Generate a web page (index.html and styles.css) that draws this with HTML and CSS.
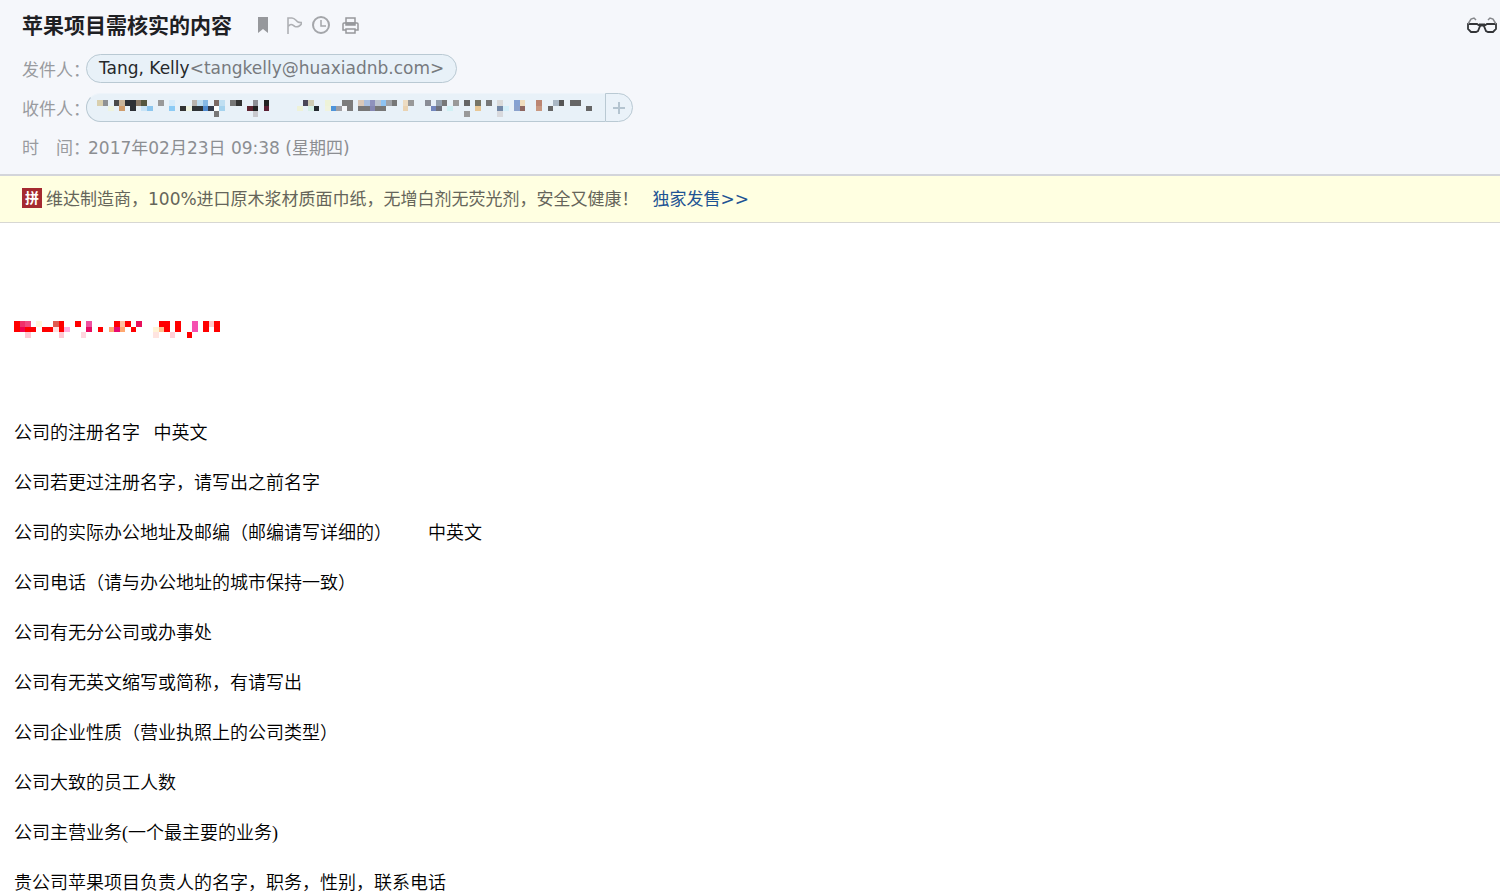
FILE: index.html
```html
<!DOCTYPE html>
<html lang="zh-CN">
<head>
    <meta charset="UTF-8">
    <meta name="viewport" content="width=device-width, initial-scale=1.0">
    <title>苹果项目需核实的内容</title>
    <link rel="stylesheet" href="styles.css">
</head>
<body>
    <header class="mail-header">
        <div class="title-row">
            <h1 class="mail-title">苹果项目需核实的内容</h1>
            <div class="mail-tools">
                <button class="icon-btn" aria-label="书签">
                    <svg width="20" height="20" viewBox="0 0 20 20"><path d="M5 1h10v16l-5-4-5 4z" fill="#96989c"/></svg>
                </button>
                <button class="icon-btn" aria-label="标记">
                    <svg width="20" height="20" viewBox="0 0 20 20" fill="none" stroke="#aeb0b4" stroke-width="1.6"><path d="M6 18V2h4c3 0 4 3 6 4 1 .6 2 .5 4 .5-1 3-4 5-7 4-2-1-2-2-4-2-1 0-2 1-3 2"/></svg>
                </button>
                <button class="icon-btn" aria-label="提醒">
                    <svg width="20" height="20" viewBox="0 0 20 20" fill="none" stroke="#a4a6aa" stroke-width="2"><circle cx="10" cy="9" r="8"/><path d="M10 4v6h5" stroke-width="1.5"/></svg>
                </button>
                <button class="icon-btn" aria-label="打印">
                    <svg width="20" height="20" viewBox="0 0 20 20" fill="none" stroke="#96989c" stroke-width="1.5"><path d="M6 7V2h9v5"/><path d="M6 14H3V8q0-1 1-1h13q1 0 1 1v6h-3"/><path d="M6 7h9v2H6z" fill="#96989c"/><path d="M6 13h9v4H6z"/></svg>
                </button>
            </div>
            <button class="icon-btn reader-btn" aria-label="阅读模式">
                <svg width="32" height="18" viewBox="0 0 32 18" fill="none" stroke="#333538" stroke-width="1.8"><path d="M2 7h9l3 2-2 5-2 1H5l-3-3z"/><path d="M30 7h-9l-3 2 2 5 2 1h5l3-3z"/><path d="M13 8h6" stroke-width="3"/><path d="M2 7l3-5 3-1 2 2M30 7l-3-5-3-1-2 2" stroke="#85878b" stroke-width="1.5"/></svg>
            </button>
        </div>
        <div class="info-row">
            <span class="label">发件人：</span>
            <span class="bubble"><span class="name">Tang, Kelly</span>&lt;tangkelly@huaxiadnb.com&gt;</span>
        </div>
        <div class="info-row">
            <span class="label">收件人：</span>
            <span class="bubble bubble-to"><svg id="toMosaic" width="495" height="17" viewBox="0 0 89 3" shape-rendering="crispEdges"></svg></span>
            <button class="add-btn" aria-label="添加">
                <svg width="12" height="12" viewBox="0 0 12 12"><path d="M6 0v12M0 6h12" stroke="#b4c4d0" stroke-width="2"/></svg>
            </button>
        </div>
        <div class="info-row">
            <span class="label">时　间：</span>
            <span class="date">2017年02月23日 09:38 (星期四)</span>
        </div>
    </header>

    <div class="ad-bar">
        <span class="ad-logo">拼</span>
        <span class="ad-text">维达制造商，100%进口原木浆材质面巾纸，无增白剂无荧光剂，安全又健康！</span>
        <a class="ad-link" href="#">独家发售&gt;&gt;</a>
    </div>

    <main class="mail-body">
        <svg class="greeting" id="nameMosaic" width="206" height="17" viewBox="0 0 37 3" shape-rendering="crispEdges"></svg>
        <p>公司的注册名字&nbsp;&nbsp; 中英文</p>
        <p>公司若更过注册名字，请写出之前名字</p>
        <p>公司的实际办公地址及邮编（邮编请写详细的）&nbsp;&nbsp;&nbsp;&nbsp;&nbsp;&nbsp;&nbsp; 中英文</p>
        <p>公司电话（请与办公地址的城市保持一致）</p>
        <p>公司有无分公司或办事处</p>
        <p>公司有无英文缩写或简称，有请写出</p>
        <p>公司企业性质（营业执照上的公司类型）</p>
        <p>公司大致的员工人数</p>
        <p>公司主营业务(一个最主要的业务)</p>
        <p>贵公司苹果项目负责人的名字，职务，性别，联系电话</p>
    </main>

    <script>
        // 打码色块，每行: 列号 颜色
        const toRows = [
            '0 d9cfae,1 8f9194,3 4a4a4a,4 c9b49a,5 2d3036,6 2d3036,7 8a7a68,8 55573f,11 999999,13 d6ebfa,17 b8b3ad,18 bddcf0,19 86b9e6,21 7b6a64,22 bfdff2,24 777777,25 333333,28 8e8f96,30 222222,37 4a4658,38 cfccb5,41 eef3d8,44 7c7c7c,45 7c7c7c,47 d9c8b8,48 a9bfdf,49 8f92bd,50 bcc4d0,51 8ec3f2,52 a0a3a8,53 777777,55 eddcc2,56 999999,59 8a8d96,61 94a0ad,62 777777,64 999999,66 666666,68 777566,70 777777,72 dadada,75 86a2d2,76 f0dcbd,79 bb8572,82 a9b7c4,83 555555,85 666666,86 666666',
            '2 eef3e0,4 cf9c6c,6 2d3036,8 c8e4f7,9 8cc6ee,13 8ccbf5,15 333333,16 eef3e0,17 2f3336,18 2f3336,19 4f8bd0,20 333a4a,21 ffffff,22 a5d3ee,27 5e2532,28 222222,30 5a1f33,36 eef2d8,38 d6efe6,39 252a30,41 f0f3dd,42 4d94da,43 a0a0a4,44 f5f7fa,45 7c7c7c,47 777777,48 777777,49 8587b3,50 777777,51 777777,55 ead3b2,60 7286bd,61 6f727c,63 d0f0f4,68 e8c795,72 7489a8,73 d4effa,75 8ba2cc,76 8e6660,79 c89780,81 666666,88 666666',
            '21 777777,28 c8c8cd,66 999999,72 d8d9dd'
        ];
        const nameRows = [
            '0 ff0000,1 f0306a,2 f04a80,4 fff6dc,7 e05a50,8 ff0000,11 ff0000,13 ee50a0,18 ff0000,19 ffc0a0,20 ff0000,22 e8105a,26 ff0000,27 ff0000,29 ff0000,32 f550b0,34 ff0000,35 ffc8c8,36 ff0000',
            '0 ff0000,1 f00050,2 ff0000,3 ff0000,5 ff0000,6 ff0000,7 ffe0e0,8 ff0000,9 ffb0e0,13 e80a60,15 ff0000,17 ffa870,18 e80a70,19 ffa870,21 ff0000,25 fff3d6,26 ffc090,27 ff0000,29 ff0000,32 f550b0,34 ff0000,36 ff0000',
            '2 ffc8d4,8 ffc8d4,12 ffd6de,25 ffe4e0,28 ffd0d8,31 ff0000'
        ];

        function drawMosaic(id, rows) {
            document.getElementById(id).innerHTML = rows.map((row, y) =>
                row.split(',').map(cell => {
                    const [x, color] = cell.split(' ');
                    return `<rect x="${x}" y="${y}" width="1" height="1" fill="#${color}"/>`;
                }).join('')
            ).join('');
        }

        drawMosaic('toMosaic', toRows);
        drawMosaic('nameMosaic', nameRows);
    </script>
</body>
</html>
```
FILE: styles.css
```css
* {
    margin: 0;
    padding: 0;
    box-sizing: border-box;
}

body {
    font-family: "DejaVu Sans", "Noto Sans CJK SC", sans-serif;
    font-size: 17px;
    background: #fff;
    color: #000;
    min-height: 100vh;
    overflow-x: hidden;
}

button {
    border: none;
    background: none;
    cursor: pointer;
}

/* 邮件头 */
.mail-header {
    background: #f5f7fb;
    border-bottom: 2px solid #d3d5da;
    padding: 11px 0 8px 22px;
}

.title-row {
    display: flex;
    align-items: center;
    height: 30px;
    margin-bottom: 8px;
}

.mail-title {
    font-size: 21px;
    line-height: 30px;
    color: #1e2023;
}

.mail-tools {
    display: flex;
    gap: 9px;
    margin-left: 21px;
}

.icon-btn {
    display: flex;
}

.reader-btn {
    margin-left: auto;
    padding-right: 2px;
}

.info-row {
    display: flex;
    align-items: center;
    height: 39px;
    color: #8c8e92;
}

.label {
    width: 64px;
    font-size: 17px;
    white-space: nowrap;
    color: #999b9f;
}

.bubble {
    display: flex;
    align-items: center;
    height: 29px;
    padding: 0 12px 2px;
    font-size: 17px;
    border: 1px solid #b9c9d3;
    border-radius: 15px;
    background: #e8f1f8;
    color: #777a7e;
}

.name {
    color: #26282b;
}

.bubble-to {
    padding: 2px 13px 0 10px;
    border-top-color: #eef4fa;
    border-right: none;
    border-radius: 15px 0 0 15px;
}

.add-btn {
    display: flex;
    align-items: center;
    justify-content: center;
    width: 28px;
    height: 29px;
    border: 1px solid #b9c9d3;
    border-radius: 0 15px 15px 0;
    background: #eaf2f9;
}

.date {
    padding-left: 2px;
}

/* 广告条 */
.ad-bar {
    display: flex;
    align-items: center;
    height: 47px;
    padding: 0 22px 3px;
    background: #ffffe1;
    border-bottom: 1px solid #d7d7d3;
    color: #65655a;
    white-space: nowrap;
}

.ad-logo {
    width: 20px;
    height: 20px;
    margin-right: 4px;
    background: #a52a30;
    color: #fff;
    font-size: 14px;
    font-weight: bold;
    line-height: 20px;
    text-align: center;
}

.ad-link {
    margin-left: 14px;
    color: #1e5494;
    text-decoration: none;
}

/* 正文 */
.mail-body {
    padding: 98px 14px 0;
    font-family: "Liberation Serif", "Noto Sans CJK SC", serif;
    font-size: 18px;
    font-weight: 350;
}

.greeting {
    display: block;
    margin-bottom: 82px;
}

.mail-body p {
    line-height: 26px;
    margin-bottom: 24px;
}
```
